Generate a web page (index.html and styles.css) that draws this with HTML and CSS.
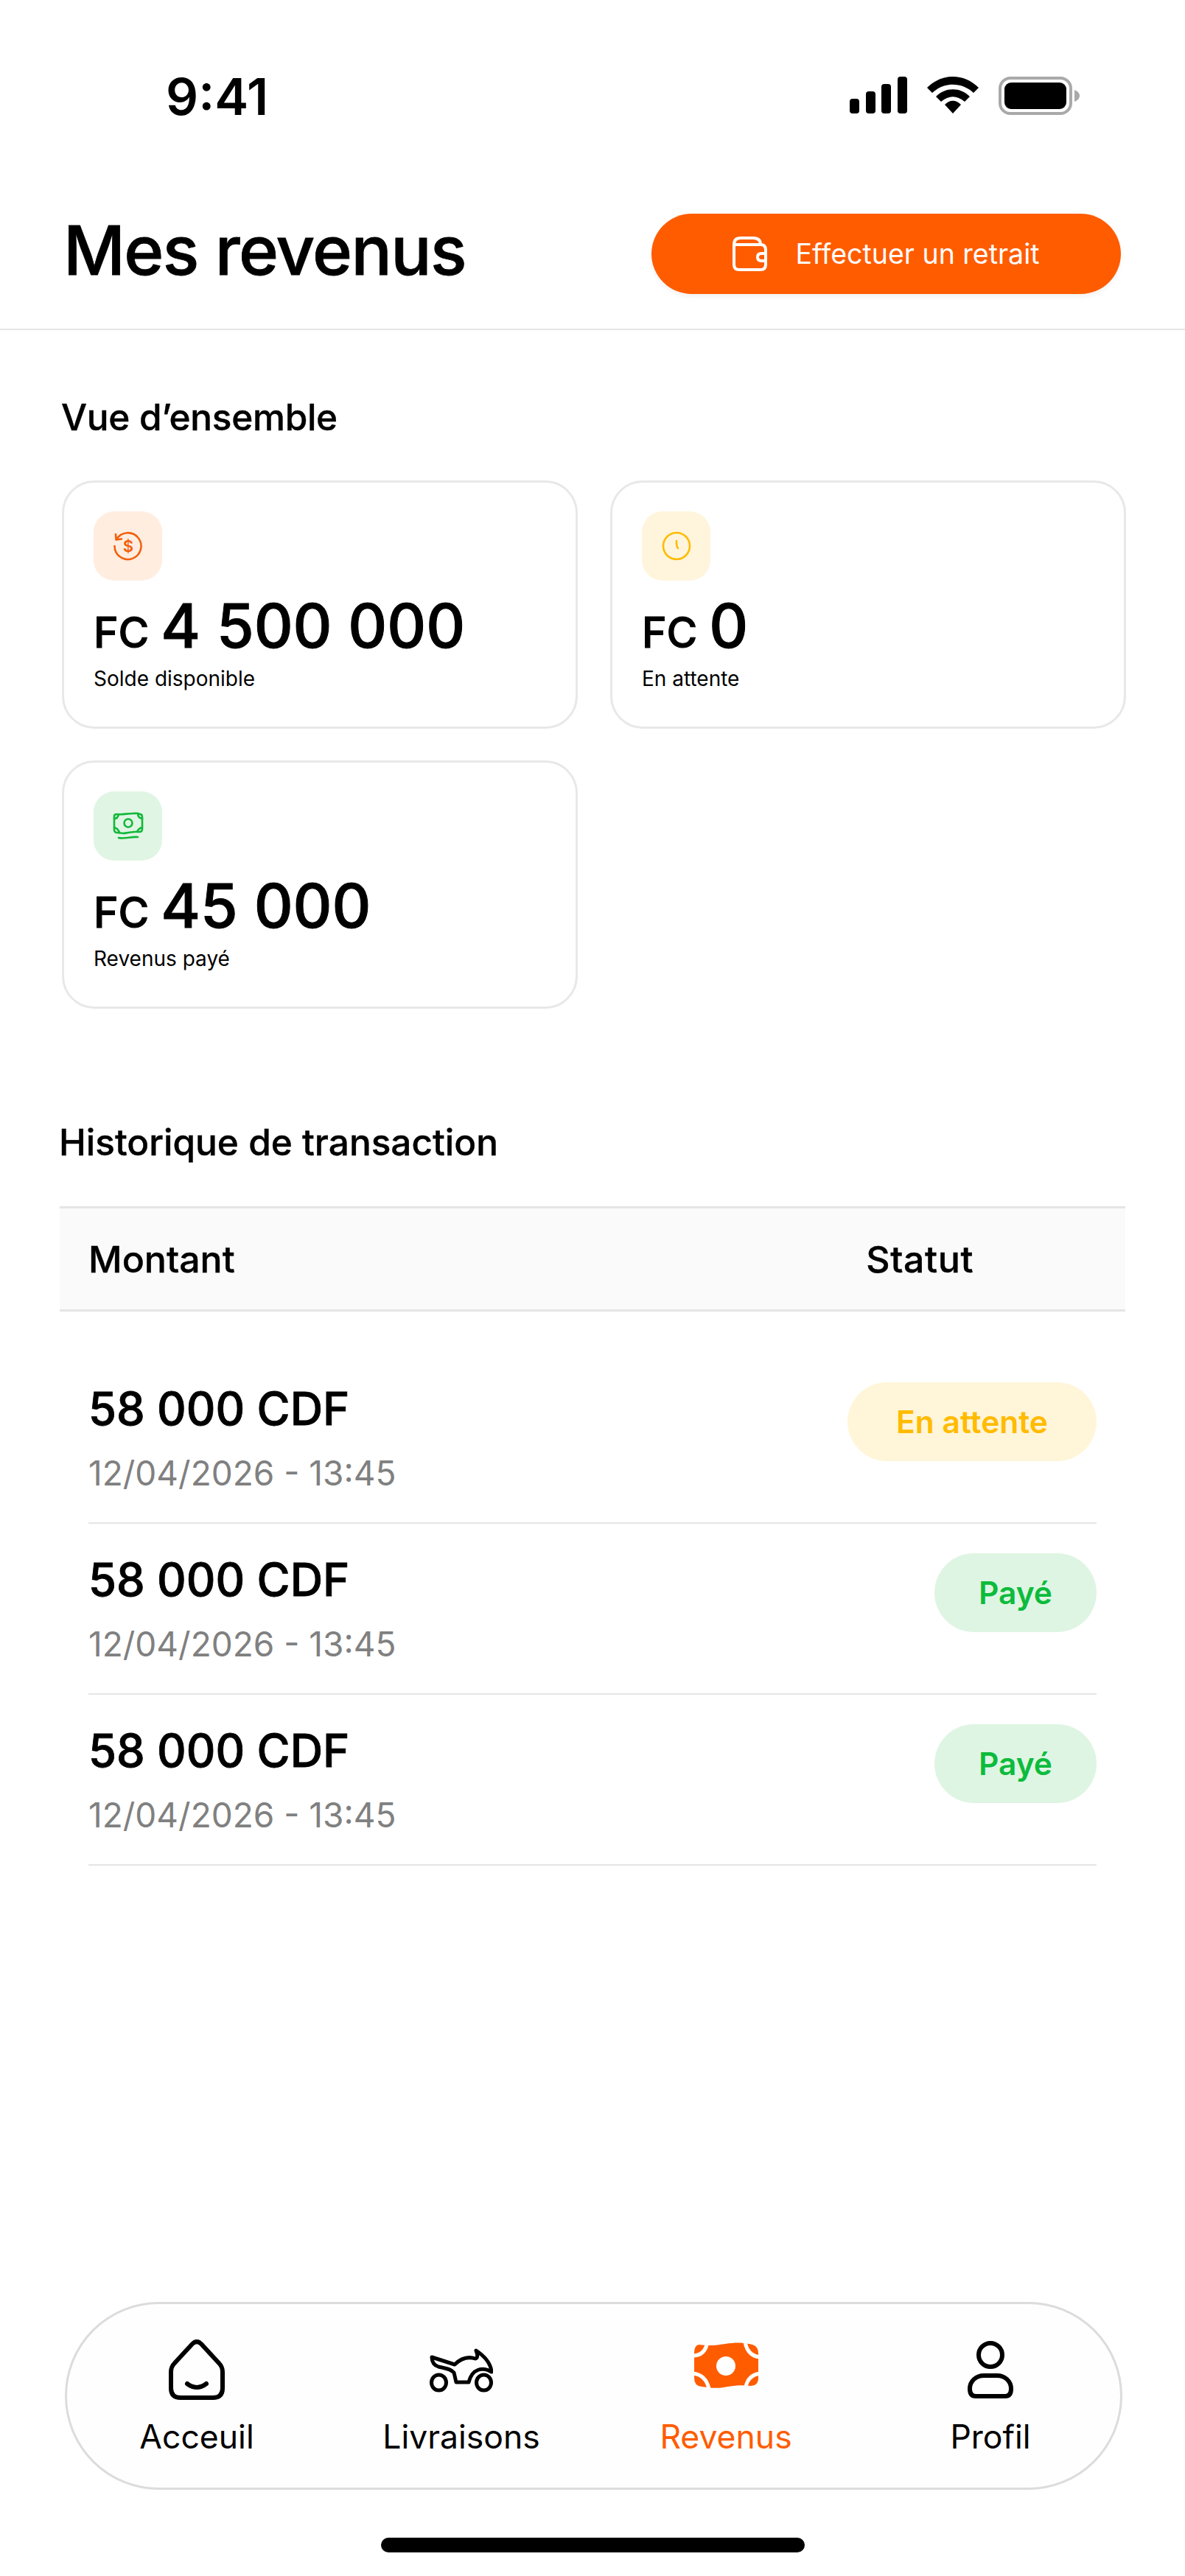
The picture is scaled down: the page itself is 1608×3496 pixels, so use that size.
FILE: index.html
```html
<!DOCTYPE html>
<html lang="fr">
<head>
    <meta charset="UTF-8">
    <meta name="viewport" content="width=device-width, initial-scale=1.0">
    <title>Mes revenus</title>
    <link rel="stylesheet" href="styles.css">
</head>
<body>
    <!-- Status bar -->
    <div class="status-bar">
        <span class="time">9:41</span>
        <div class="status-icons">
            <svg class="signal" width="78" height="50" viewBox="0 0 78 50">
                <rect x="0" y="30" width="13" height="20" rx="4"/>
                <rect x="22" y="20" width="13" height="30" rx="4"/>
                <rect x="43" y="10" width="13" height="40" rx="4"/>
                <rect x="65" y="0" width="13" height="50" rx="4"/>
            </svg>
            <svg class="wifi" width="70" height="50" viewBox="0 0 70 50">
                <path d="M0 15 C20 -5 50 -5 70 15 L63 22 C47 7 23 7 7 22 Z"/>
                <path d="M12 27 C25 14 45 14 58 27 L51 34 C40 25 30 25 19 34 Z"/>
                <path d="M24 38 C31 31 39 31 46 38 L35 50 Z"/>
            </svg>
            <svg class="battery" width="110" height="52" viewBox="0 0 110 52">
                <rect x="2" y="2" width="96" height="48" rx="14" fill="none" stroke="#a9a9a9" stroke-width="4"/>
                <rect x="8" y="8" width="84" height="36" rx="9"/>
                <path d="M103 18 C108 20 110 23 110 26 C110 29 108 32 103 34 Z" fill="#a9a9a9"/>
            </svg>
        </div>
    </div>

    <!-- Page header -->
    <header class="page-header">
        <h1>Mes revenus</h1>
        <button class="withdraw-btn" type="button">
            <svg width="47" height="47" viewBox="0 0 47 47" fill="none" stroke="#fff" stroke-width="4" stroke-linejoin="round">
                <path d="M2 11 V38 Q2 45 9 45 H38 Q45 45 45 38 V18 Q45 11 38 11 H8 Q2 11 2 11 Q2 2 11 2 H28 Q38 2 38 11"/>
                <path d="M45 23 H39 Q34 23 34 28 Q34 33 39 33 H45"/>
            </svg>
            <span>Effectuer un retrait</span>
        </button>
    </header>

    <main>
        <h2 class="overview-title">Vue d’ensemble</h2>
        <div class="cards">
            <div class="card">
                <div class="card-icon icon-orange">
                    <svg width="44" height="44" viewBox="0 0 44 44" fill="none" stroke="#f2600c" stroke-width="2.6" stroke-linecap="round" stroke-linejoin="round">
                        <path d="M6 13 A18 18 0 1 1 3.5 22"/>
                        <path d="M5 6 L5.5 13.5 L13 12.5"/>
                        <text x="22" y="30" class="dollar" fill="#f2600c" stroke="none">$</text>
                    </svg>
                </div>
                <p class="amount"><span class="currency">FC</span> 4 500 000</p>
                <p class="card-label">Solde disponible</p>
            </div>
            <div class="card">
                <div class="card-icon icon-yellow">
                    <svg width="44" height="44" viewBox="0 0 44 44" fill="none" stroke="#ffbb00" stroke-width="2.6" stroke-linecap="round">
                        <circle cx="22" cy="22" r="18"/>
                        <path d="M22 15 Q21.5 22 24 25"/>
                    </svg>
                </div>
                <p class="amount"><span class="currency">FC</span> 0</p>
                <p class="card-label">En attente</p>
            </div>
            <div class="card">
                <div class="card-icon icon-green">
                    <svg width="44" height="44" viewBox="0 0 44 44" fill="none" stroke="#12b83a" stroke-width="2.6" stroke-linecap="round" stroke-linejoin="round">
                        <path d="M6 6 C14 7 20 5 28 5 C32 5 36 4 38 6 Q41 6 41 10 V26 Q41 30 37 30 C30 29 22 31 16 32 L7 31 Q3 31 3 27 V9 Q3 6 6 6 Z"/>
                        <circle cx="22" cy="18" r="5.5"/>
                        <path d="M3 12 Q8 12 9 6 M35 5 Q35 11 41 12 M3 24 Q8 25 10 31 M41 24 Q36 25 34 30"/>
                        <path d="M9 38 C17 40 26 36 35 37"/>
                    </svg>
                </div>
                <p class="amount"><span class="currency">FC</span> 45 000</p>
                <p class="card-label">Revenus payé</p>
            </div>
        </div>

        <h2 class="history-title">Historique de transaction</h2>
        <div class="table-head">
            <span>Montant</span>
            <span class="status-col">Statut</span>
        </div>
        <div class="rows">
            <div class="row">
                <div>
                    <p class="row-amount">58 000 CDF</p>
                    <p class="row-date">12/04/2026 - 13:45</p>
                </div>
                <span class="pill pill-pending">En attente</span>
            </div>
            <div class="row">
                <div>
                    <p class="row-amount">58 000 CDF</p>
                    <p class="row-date">12/04/2026 - 13:45</p>
                </div>
                <span class="pill pill-paid">Payé</span>
            </div>
            <div class="row">
                <div>
                    <p class="row-amount">58 000 CDF</p>
                    <p class="row-date">12/04/2026 - 13:45</p>
                </div>
                <span class="pill pill-paid">Payé</span>
            </div>
        </div>
    </main>

    <!-- Bottom navigation -->
    <nav class="bottom-nav">
        <a class="nav-item">
            <span class="nav-icon">
                <svg width="76" height="82" viewBox="0 0 76 82" fill="none" stroke="#000" stroke-width="6" stroke-linecap="round" stroke-linejoin="round">
                    <path d="M32 6 L8 32 Q3 37 3 44 V66 Q3 79 16 79 H60 Q73 79 73 66 V44 Q73 37 68 32 L44 6 Q38 0 32 6 Z"/>
                    <path d="M25 60 Q38 70 51 60"/>
                </svg>
            </span>
            <span>Acceuil</span>
        </a>
        <a class="nav-item">
            <span class="nav-icon">
                <svg width="86" height="61" viewBox="0 0 86 61" fill="none" stroke="#000" stroke-width="5" stroke-linejoin="round">
                    <ellipse cx="12.5" cy="47.5" rx="10" ry="10.5"/>
                    <ellipse cx="73.5" cy="47.5" rx="10" ry="10.5"/>
                    <path d="M3 13 L34 23 C40 17 50 11 62 15 C66 14 65 9 63 4 C75 12 83 22 84 33 C72 26 58 28 53 47 H36 L33 34 C28 28 20 28 12 26 C6 24 3 19 3 13 Z"/>
                </svg>
            </span>
            <span>Livraisons</span>
        </a>
        <a class="nav-item is-active">
            <span class="nav-icon">
                <svg class="money-solid" width="87" height="61" viewBox="0 0 87 61">
                    <path fill="#ff5c00" d="M7 2 C20 4 30 3 42 1 C55 -1 65 -1 74 1 Q87 2 87 14 V47 Q87 58 76 58 C62 56 50 58 40 60 C28 62 18 60 10 59 Q0 58 0 47 V14 Q0 2 7 2 Z"/>
                    <circle cx="43" cy="31" r="13" fill="#fff"/>
                    <g fill="none" stroke="#fff" stroke-width="5">
                        <path d="M-2 17 Q15 17 18 -2"/>
                        <path d="M69 -2 Q72 17 89 19"/>
                        <path d="M-2 41 Q16 43 20 62"/>
                        <path d="M70 60 Q72 44 89 41"/>
                    </g>
                </svg>
            </span>
            <span>Revenus</span>
        </a>
        <a class="nav-item">
            <span class="nav-icon">
                <svg width="62" height="78" viewBox="0 0 62 78" fill="none" stroke="#000" stroke-width="6" stroke-linejoin="round">
                    <circle cx="31" cy="19" r="16"/>
                    <path d="M3 65 C3 54 12 47 22 47 H40 C50 47 59 54 59 65 Q59 75 51 75 H11 Q3 75 3 65 Z"/>
                </svg>
            </span>
            <span>Profil</span>
        </a>
    </nav>

    <div class="home-indicator"></div>
</body>
</html>
```

FILE: styles.css
```css
* {
    box-sizing: border-box;
}

html, body {
    margin: 0;
    padding: 0;
}

body {
    display: flex;
    flex-direction: column;
    min-height: 3496px;
    background-color: #fff;
    color: #000;
    font-family: Inter, "Noto Sans", sans-serif;
}

h1, h2, p {
    margin: 0;
}

/* Status bar */
.status-bar {
    display: flex;
    justify-content: space-between;
    align-items: flex-start;
    height: 239px;
    padding: 95px 143px 0 225px;
}

.time {
    font-size: 69px;
    font-weight: 600;
    line-height: 72px;
}

.status-icons {
    display: flex;
    align-items: flex-start;
    gap: 27px;
    padding-top: 9px;
}

/* Header */
.page-header {
    display: flex;
    justify-content: space-between;
    align-items: center;
    height: 209px;
    padding: 0 87px 0 86px;
    border-bottom: 2px solid #e6e6e6;
}

h1 {
    margin-bottom: 6px;
    font-size: 92px;
    font-weight: 500;
    line-height: 110px;
    letter-spacing: -1.6px;
    -webkit-text-stroke: 0.8px #000;
}

.withdraw-btn {
    display: flex;
    justify-content: center;
    align-items: center;
    gap: 38px;
    width: 637px;
    height: 109px;
    margin-top: 4px;
    border: none;
    border-radius: 55px;
    background-color: #ff5c00;
    box-shadow: 0 4px 6px rgba(0, 0, 0, 0.05);
    color: #fff;
    font-family: inherit;
    font-size: 37.5px;
    font-weight: 400;
}

main {
    flex: 1;
    padding: 88px 81px 0;
}

h2 {
    font-size: 49.5px;
    font-weight: 500;
    line-height: 60px;
    -webkit-text-stroke: 0.4px #000;
}

.overview-title {
    margin-left: 2px;
    letter-spacing: -0.3px;
}

/* Overview cards */
.cards {
    display: grid;
    grid-template-columns: 1fr 1fr;
    gap: 43px 44px;
    margin: 56px -1px 0 3px;
}

.card {
    height: 337px;
    padding: 39px 38px 39px 40px;
    border: 3px solid #e8e8e8;
    border-radius: 44px;
}

.card-icon {
    display: flex;
    justify-content: center;
    align-items: center;
    width: 93px;
    height: 94px;
    border-radius: 28px;
}

.icon-orange { background-color: #ffede0; }
.icon-yellow { background-color: #fff5dc; }
.icon-green { background-color: #e0f5e4; }

.dollar {
    font-family: Inter, sans-serif;
    font-size: 22px;
    font-weight: 600;
    text-anchor: middle;
}

.amount {
    margin-top: 12px;
    font-size: 82px;
    font-weight: 500;
    line-height: 100px;
    -webkit-text-stroke: 1px #000;
}

.currency {
    margin-right: -6px;
    font-size: 57px;
}

.card-label {
    margin-top: -6px;
    font-size: 28px;
    line-height: 36px;
}

/* Transactions */
.history-title {
    margin: 151px 0 0 -1px;
}

.table-head {
    display: flex;
    justify-content: space-between;
    align-items: center;
    height: 143px;
    margin-top: 57px;
    padding: 0 206px 0 39px;
    border-top: 3px solid #e5e5e5;
    border-bottom: 3px solid #e5e5e5;
    background-color: #fafafa;
    font-size: 50px;
    font-weight: 500;
    -webkit-text-stroke: 0.4px #000;
}

.status-col {
    letter-spacing: 0.6px;
}

.rows {
    margin: 56px 39px 0;
}

.row {
    display: flex;
    justify-content: space-between;
    align-items: flex-start;
    height: 232px;
    padding-top: 40px;
    border-bottom: 2px solid #e5e5e5;
}

.row-amount {
    font-size: 61.5px;
    font-weight: 500;
    line-height: 72px;
    -webkit-text-stroke: 0.8px #000;
}

.row-date {
    margin-top: 21px;
    color: #808080;
    font-size: 46px;
    line-height: 60px;
}

.pill {
    display: flex;
    align-items: center;
    height: 107px;
    border-radius: 54px;
    font-size: 42.5px;
    font-weight: 600;
}

.pill-pending {
    padding: 0 66px;
    background-color: #fff5d9;
    color: #ffbb00;
}

.pill-paid {
    padding: 0 60px;
    background-color: #dff5e3;
    color: #0dbb3c;
}

/* Bottom navigation */
.bottom-nav {
    display: flex;
    justify-content: center;
    height: 255px;
    margin: 0 85px 0 88px;
    padding-top: 48px;
    border: 3px solid #dcdcdc;
    border-radius: 128px;
    background-color: #fefefe;
}

.nav-item {
    display: flex;
    flex: 0 0 359px;
    flex-direction: column;
    align-items: center;
    font-size: 44.5px;
    line-height: 56px;
}

.nav-icon {
    display: flex;
    justify-content: center;
    align-items: center;
    height: 82px;
    margin-bottom: 22px;
}

.is-active {
    color: #ff5c00;
}

.money-solid {
    margin-bottom: 12px;
    overflow: visible;
}

.home-indicator {
    width: 575px;
    height: 20px;
    margin: 65px auto 32px;
    border-radius: 10px;
    background-color: #000;
}
```
